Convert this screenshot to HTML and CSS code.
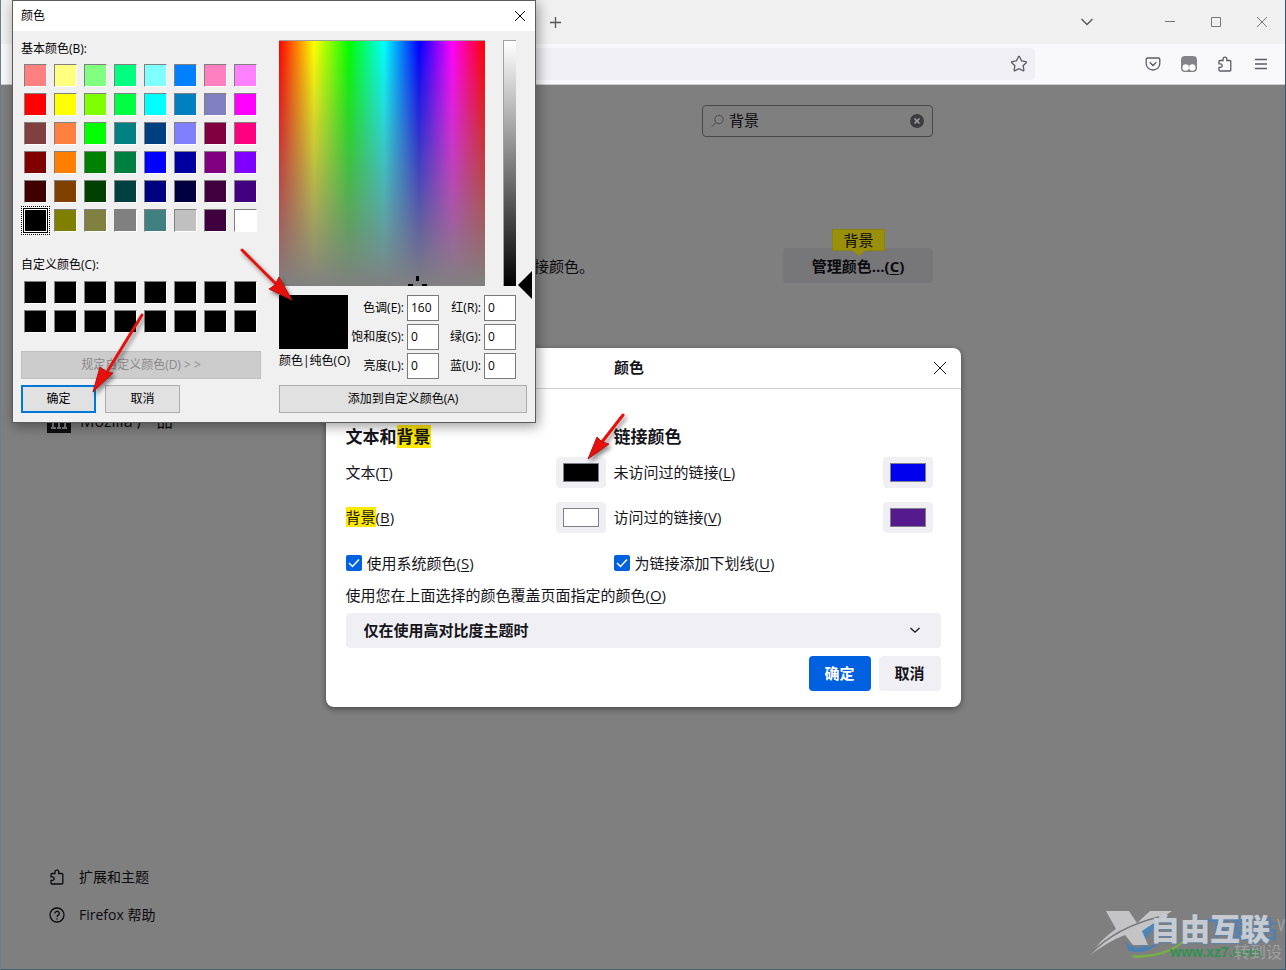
FILE: index.html
```html
<!DOCTYPE html>
<html lang="zh-CN">
<head>
<meta charset="utf-8">
<title>颜色</title>
<link rel="stylesheet" href="styles.css">
</head>
<body>
<div class="browser">
  <header class="tabstrip">
    <button class="tool" aria-label="新建标签页"><svg width="16" height="16" viewBox="0 0 16 16"><path d="M8.500 3v11M3 8.500h11"/></svg></button>
    <span class="grow"></span>
    <button class="tool tablist" aria-label="列出标签页"><svg width="16" height="16" viewBox="0 0 16 16"><path d="M2.500 5l5.500 5.500L13.500 5"/></svg></button>
    <button class="winctl" aria-label="最小化"><svg width="12" height="12" viewBox="0 0 12 12"><path d="M1 5.500h10"/></svg></button>
    <button class="winctl" aria-label="最大化"><svg width="12" height="12" viewBox="0 0 12 12"><path d="M1.500 1.500h9v9h-9z"/></svg></button>
    <button class="winctl" aria-label="关闭窗口"><svg width="12" height="12" viewBox="0 0 12 12"><path d="M1 1l10 10M11 1L1 11"/></svg></button>
  </header>
  <div class="toolbar">
    <div class="urlbar">
      <button class="star" aria-label="收藏"><svg width="18" height="18" viewBox="0 0 18 18"><path d="M9 1.500q.5 0 .8.700L11.600 6l4.200.6q1 .3.400 1.100l-3.100 3 .8 4.300q0 1-1 .7L9 13.700l-3.900 2q-1 .3-1-.7l.8-4.300-3.100-3q-.6-.8.400-1.100L6.400 6l1.800-3.800q.3-.7.800-.7z"/></svg></button>
    </div>
    <button class="tool" aria-label="Pocket"><svg width="16" height="16" viewBox="0 0 16 16"><path d="M2.500 2h11q1.300 0 1.300 1.300V7.500a6.800 6.500 0 0 1-13.600 0V3.300Q1.200 2 2.500 2zM4.700 6.300L8 9.500l3.300-3.200"/></svg></button>
    <button class="tool" aria-label="扩展按钮"><svg width="16" height="16" viewBox="0 0 16 16"><rect x="0" y="0" width="16" height="16" rx="4" fill="#838388" stroke="none"/><circle cx="4.700" cy="11.500" r="3.200" fill="#fff" stroke="none"/><circle cx="11.300" cy="11.500" r="3.200" fill="#fff" stroke="none"/></svg></button>
    <button class="tool" aria-label="扩展"><svg width="16" height="16" viewBox="0 0 16 16"><path d="M2 5.500q0-1 1-1h3V3a1.900 1.900 0 0 1 3.800 0v1.500h3q1 0 1 1V14q0 1-1 1H3q-1 0-1-1v-2.700h1.500a1.700 1.700 0 0 0 0-3.400H2z"/></svg></button>
    <button class="tool" aria-label="菜单"><svg width="16" height="16" viewBox="0 0 16 16"><path d="M2 3.500h12M2 8h12M2 12.500h12"/></svg></button>
  </div>

  <main class="page">
    <nav class="sidebar">
      <a class="brand" href="#"><svg width="24" height="24" viewBox="0 0 24 24"><path d="M0 0h24v24H0z" fill="#101012"/><path d="M4 19h5M6 18v-6M10 19h4M12 18v-6q0-2-3-2M15 19h5M18 18v-6q0-2-3-2" fill="none" stroke="#808080" stroke-width="2"/></svg>Mozilla 产 品</a>
      <a class="navlink bottom" href="#"><svg width="16" height="16" viewBox="0 0 16 16"><path d="M2 5.500q0-1 1-1h3V3a1.900 1.900 0 0 1 3.800 0v1.500h3q1 0 1 1V14q0 1-1 1H3q-1 0-1-1v-2.700h1.500a1.700 1.700 0 0 0 0-3.400H2z"/></svg>扩展和主题</a>
      <a class="navlink" href="#"><svg width="16" height="16" viewBox="0 0 16 16"><circle cx="8" cy="8" r="7"/><path d="M5.800 6.500a2.200 2.200 0 1 1 3.300 1.900Q8 9 8 10M8 11.300v1.200"/></svg>Firefox 帮助</a>
    </nav>
    <section class="content">
      <div class="search">
        <svg width="14" height="14" viewBox="0 0 14 14"><circle cx="8" cy="5.500" r="4.200"/><path d="M5 8.500L1 12.500"/></svg>
        <input type="text" value="背景" aria-label="在设置中查找">
        <button class="clear" aria-label="清除"><svg width="14" height="14" viewBox="0 0 14 14"><circle cx="7" cy="7" r="7" fill="#3d3d41" stroke="none"/><path d="M4.500 4.500l5 5M9.500 4.500l-5 5" stroke="#a0a0a0" stroke-width="1.600"/></svg></button>
      </div>
      <div class="setting">
        <p>接颜色。</p>
        <div class="manage">
          <span class="hit">背景</span>
          <button>管理颜色...(<u>C</u>)</button>
        </div>
      </div>
    </section>

    <div class="watermark">
      <svg width="110" height="54" viewBox="0 0 110 54"><path d="M76 13Q48 17 50 31q1 7 8 7 0-15 18-25z" fill="#4a86b8"/><path d="M38 32q10 12 34 2-12 12-30 8z" fill="#4a7fb4"/><path d="M43 46q42 2 61-23Q92 48 48 49z" fill="#79ad48"/><path d="M19 2h23l8 12L63 2h22L55 22l6 14H46L38 26Q22 32 3 46 14 30 29 20z" fill="#c4c4c6"/><path d="M3 45Q30 18 72 8" fill="none" stroke="#77777a" stroke-width="1.500"/></svg>
      <span class="site">下载站</span>
      <span class="name">自由互联</span>
      <span class="url">www.xz7.com</span>
      <span class="activate">转到设</span>
      <span class="activate line">W</span>
    </div>

    <div class="backdrop">
      <form class="modal">
        <header><h1>颜色</h1><button type="button" class="close" aria-label="关闭"><svg width="14" height="14" viewBox="0 0 14 14"><path d="M1 1l12 12M13 1L1 13"/></svg></button></header>
        <div class="modal-body">
          <div class="columns">
            <h2>文本和<mark>背景</mark></h2>
            <h2>链接颜色</h2>
            <div class="pick"><label for="c1">文本(<u>T</u>)</label><input id="c1" type="color" value="#000000"></div>
            <div class="pick"><label for="c2">未访问过的链接(<u>L</u>)</label><input id="c2" type="color" value="#0000ee"></div>
            <div class="pick second"><label for="c3"><mark>背景</mark>(<u>B</u>)</label><input id="c3" type="color" value="#ffffff"></div>
            <div class="pick second"><label for="c4">访问过的链接(<u>V</u>)</label><input id="c4" type="color" value="#551a8b"></div>
            <label class="check"><input type="checkbox" checked><svg width="16" height="16" viewBox="0 0 16 16"><path d="M3 8l3.500 3.500L13 4.500"/></svg><span>使用系统颜色(<u>S</u>)</span></label>
            <label class="check"><input type="checkbox" checked><svg width="16" height="16" viewBox="0 0 16 16"><path d="M3 8l3.500 3.500L13 4.500"/></svg><span>为链接添加下划线(<u>U</u>)</span></label>
          </div>
          <label class="override" for="ov">使用您在上面选择的颜色覆盖页面指定的颜色(<u>O</u>)</label>
          <div class="select">
            <select id="ov"><option>仅在使用高对比度主题时</option></select>
            <svg width="12" height="12" viewBox="0 0 12 12"><path d="M1.500 4L6 8.200 10.500 4"/></svg>
          </div>
          <div class="actions"><button type="button" class="primary">确定</button><button type="button">取消</button></div>
        </div>
      </form>
    </div>
  </main>
</div>

<form class="picker">
  <header><h1>颜色</h1><button type="button" class="close" aria-label="关闭"><svg width="12" height="12" viewBox="0 0 12 12"><path d="M1 1l10 10M11 1L1 11"/></svg></button></header>
  <div class="picker-body">
    <div class="left">
      <p>基本颜色(B):</p>
      <div class="swatches" id="basic"></div>
      <p class="custom-title">自定义颜色(C):</p>
      <div class="swatches custom" id="custom"></div>
      <button type="button" class="define" disabled>规定自定义颜色(D) &gt; &gt;</button>
      <div class="buttons"><button type="button" class="default">确定</button><button type="button">取消</button></div>
    </div>
    <div class="right">
      <div class="fields-top">
        <div class="spectrum"><svg class="cross" width="20" height="10" viewBox="0 0 20 10"><path d="M8 0h3v5H8zM0 8h5v2H0zM14 8h5v2h-5z"/></svg></div>
        <div class="lum"><svg class="marker" width="14" height="28" viewBox="0 0 14 28"><path d="M0 14L14 0v28z"/></svg></div>
      </div>
      <div class="values">
        <div class="preview"><div class="solid"></div><p>颜色|纯色(O)</p></div>
        <div class="fields">
          <label for="h">色调(E):</label><input id="h" type="text" value="160"><label for="r">红(R):</label><input id="r" type="text" value="0">
          <label for="s">饱和度(S):</label><input id="s" type="text" value="0"><label for="g">绿(G):</label><input id="g" type="text" value="0">
          <label for="l">亮度(L):</label><input id="l" type="text" value="0"><label for="b">蓝(U):</label><input id="b" type="text" value="0">
        </div>
      </div>
      <button type="button" class="add">添加到自定义颜色(A)</button>
    </div>
  </div>
</form>

<svg class="arrow a1" width="60" height="60" viewBox="0 0 60 60"><path class="shaft" d="M5 5L40 40"/><path d="M55 55L32 44l6-4 4-8z"/></svg>
<svg class="arrow a2" width="60" height="86" viewBox="0 0 60 86"><path class="shaft" d="M52 5L17 62"/><path d="M3 82L10 57l7 5 6 1z"/></svg>
<svg class="arrow a3" width="50" height="56" viewBox="0 0 50 56"><path class="shaft" d="M43 5L22 32"/><path d="M8 49L17 27l5 5 7 2z"/></svg>
<script src="script.js"></script>
</body>
</html>
```

FILE: styles.css
```css
* { box-sizing: border-box; }
body {
  margin: 0;
  font: 15px/20px "Open Sans", "Noto Sans CJK SC", sans-serif;
  color: #15141a;
  overflow: hidden;
}
h1, h2, p { margin: 0; }
button, input, select { font: inherit; color: inherit; }
button { border: 0; padding: 0; background: none; }
svg { display: block; flex: none; fill: none; stroke: currentColor; }
a { color: inherit; text-decoration: none; }
u { text-underline-offset: 2px; }
mark { background: #ffe900; color: inherit; }

.browser {
  display: flex;
  flex-direction: column;
  min-height: 100vh;
  border-right: 1px solid #34557f;
  border-bottom: 1px solid #3e6377;
  border-left: 1px solid #6c7f8e;
}
.tabstrip {
  display: flex;
  align-items: center;
  height: 44px;
  padding-left: 536px;
  background: #f0f0f0;
  color: #55555a;
}
.grow { flex: 1; }
.tool { display: grid; place-items: center; width: 36px; height: 32px; }
.tool svg, .star svg { stroke-width: 1.3; }
.tablist { margin-right: 42px; }
.winctl { display: grid; place-items: center; width: 46px; height: 44px; color: #777; }
.toolbar {
  display: flex;
  align-items: center;
  height: 41px;
  padding: 0 6px 1px 0;
  background: #f9f9fb;
  border-bottom: 1px solid #ccc;
  color: #5b5b66;
}
.urlbar {
  display: flex;
  justify-content: flex-end;
  align-items: center;
  flex: 1;
  height: 32px;
  margin: 0 100px 0 300px;
  padding-right: 7px;
  background: #f0f0f4;
  border-radius: 4px;
}
.page { position: relative; display: flex; flex: 1; background: #7f7f7f; color: #0b0a0d; }
.sidebar { display: flex; flex-direction: column; width: 268px; padding: 324px 0 35px 46px; font-size: 14px; }
.brand { display: flex; align-items: center; gap: 9px; font-size: 16px; line-height: 24px; }
.navlink { display: flex; align-items: center; gap: 14px; height: 38px; padding-left: 2px; }
.navlink svg { stroke-width: 1.3; }
.bottom { margin-top: auto; }
.content { flex: 1; max-width: 664px; padding-top: 20px; }
.search {
  display: flex;
  align-items: center;
  gap: 4px;
  width: 231px;
  height: 32px;
  margin-left: auto;
  padding: 0 8px;
  border: 1px solid #48484c;
  border-radius: 4px;
}
.search > svg { color: #48484c; }
.search input { flex: 1; min-width: 0; padding: 0 0 2px; border: 0; background: none; outline: 0; }
.setting { display: flex; align-items: center; justify-content: space-between; margin-top: 111px; padding-left: 265px; }
.manage { position: relative; }
.manage button { width: 150px; height: 35px; border-radius: 4px; background: #77777a; font-weight: 700; }
.hit {
  position: absolute;
  z-index: 1;
  left: 49px;
  top: -19px;
  width: 53px;
  height: 22px;
  border: 1px solid #8c8410;
  background: #9a8f0a;
  text-align: center;
}
.hit::after {
  content: "";
  position: absolute;
  left: 19px;
  top: 20px;
  border: 7px solid transparent;
  border-top: 6px solid #9a8f0a;
  border-bottom: 0;
}

.backdrop { position: absolute; inset: 0; display: grid; place-items: center; }
.modal {
  width: 100%;
  max-width: 635px;
  border-radius: 8px;
  background: #fff;
  color: #15141a;
  box-shadow: 0 2px 6px rgba(0, 0, 0, .45);
}
.modal header { position: relative; height: 41px; border-bottom: 1px solid #cfcfd3; }
.modal h1 { padding-right: 28px; font-size: 15px; line-height: 38px; text-align: center; font-weight: 600; }
.modal .close { position: absolute; right: 14px; top: 13px; }
.modal-body { padding: 36px 20px 16px; }
.columns { display: grid; grid-template-columns: 260fr 319fr; column-gap: 8px; padding-right: 8px; }
.modal h2 { font-size: 17px; line-height: 24px; font-weight: 700; margin-bottom: 8px; }
.pick { display: flex; align-items: center; justify-content: space-between; height: 31px; }
.pick.second { margin-top: 14px; }
.pick input {
  appearance: none;
  width: 50px;
  height: 31px;
  padding: 6px 7px;
  border: 0;
  border-radius: 4px;
  background: #f0f0f4;
}
.pick input::-webkit-color-swatch-wrapper { padding: 0; }
.pick input::-webkit-color-swatch { border: 1px solid #7f7f88; border-radius: 0; }
.check { position: relative; display: flex; align-items: center; gap: 5px; margin-top: 20px; }
.check input { appearance: none; width: 16px; height: 16px; margin: 0; border-radius: 2px; background: #0061e0; }
.check svg { position: absolute; left: 0; top: 2px; stroke: #fff; stroke-width: 1.5; }
.override { display: block; margin: 12px 0 8px; }
.select { position: relative; }
.select select {
  appearance: none;
  display: block;
  width: 100%;
  height: 35px;
  padding: 0 18px;
  border: 0;
  border-radius: 4px;
  background: #f0f0f4;
  font-weight: 600;
}
.select svg { position: absolute; right: 20px; top: 11px; stroke-width: 1.3; }
.actions { display: flex; justify-content: flex-end; gap: 8px; margin-top: 8px; }
.actions button { width: 62px; height: 35px; border-radius: 4px; background: #f0f0f4; font-weight: 600; }
.actions .primary { background: #0061e0; color: #fff; }

.picker {
  position: absolute;
  left: 12px;
  top: 0;
  width: 524px;
  border: 1px solid #5c5c5c;
  background: #f0f0f0;
  color: #000;
  font-size: 12px;
  line-height: 16px;
  box-shadow: 2px 3px 12px rgba(0, 0, 0, .4);
}
.picker header { display: flex; align-items: center; justify-content: space-between; height: 30px; padding: 0 9px 0 8px; background: #fff; }
.picker h1 { font-size: 12px; font-weight: 400; }
.picker-body { display: flex; gap: 18px; padding: 9px 8px; }
.left { width: 240px; padding-top: 1px; }
.swatches { display: grid; grid-template-columns: repeat(8, 23px); gap: 6px 7px; margin: 7px 0 0 3px; }
.swatches button {
  height: 23px;
  border: 1px solid;
  border-color: #808080 #fff #fff #808080;
}
.swatches .chosen { border-color: #fff; outline: 1px solid #000; box-shadow: 0 0 0 2px #fff; position: relative; }
.swatches .chosen::after { content: ""; position: absolute; inset: -4px; border: 1px dotted #000; }
.custom-title { margin-top: 25px; }
.swatches.custom { margin-top: 8px; }
.left > button, .buttons button, .add { height: 28px; border: 1px solid #adadad; background: #e1e1e1; }
.left .define { display: block; width: 100%; margin-top: 18px; border-color: #bfbfbf; background: #ccc; color: #8a8a8a; }
.buttons { display: flex; gap: 9px; margin-top: 6px; }
.buttons button { width: 75px; }
.buttons .default { border: 2px solid #0078d7; }
.right { display: flex; flex-direction: column; flex: 1; }
.fields-top { display: flex; gap: 18px; }
.spectrum {
  position: relative;
  width: 206px;
  height: 246px;
  border-top: 1px solid #a0a0a0;
  background:
    linear-gradient(rgba(128, 128, 128, 0), #808080),
    linear-gradient(to right, #f00, #ff0 17%, #0f0 34%, #0ff 51%, #00f 68%, #f0f 84%, #f00);
}
.cross { position: absolute; left: 129px; bottom: 0; fill: #000; stroke: none; }
.lum { position: relative; width: 13px; height: 246px; border: solid #a0a0a0; border-width: 1px 0 0 1px; background: linear-gradient(#fff, #000); }
.marker { position: absolute; left: 14px; bottom: -13px; fill: #000; stroke: none; }
.values { display: flex; margin-top: 9px; }
.preview { width: 69px; white-space: nowrap; }
.solid { height: 54px; margin-bottom: 4px; background: #000; }
.fields { display: grid; grid-template-columns: 56px 32px 39px 32px; gap: 3px; }
.fields label { display: flex; align-items: center; justify-content: flex-end; white-space: nowrap; }
.fields input { width: 100%; height: 26px; padding: 0 3px 2px; border: 1px solid #7a7a7a; background: #fff; }
.add { margin-top: auto; }

.arrow { position: absolute; fill: #e8100c; stroke: #b01512; stroke-width: 1; filter: drop-shadow(2px 3px 2px rgba(0, 0, 0, .45)); pointer-events: none; }
.arrow .shaft { stroke: #e8100c; stroke-width: 3; stroke-linecap: round; }
.a1 { left: 237px; top: 245px; }
.a2 { left: 90px; top: 310px; }
.a3 { left: 580px; top: 410px; }

.watermark { position: absolute; right: 0; bottom: 0; width: 200px; height: 62px; overflow: hidden; white-space: nowrap; }
.watermark svg { position: absolute; left: 2px; top: 2px; stroke: none; }
.watermark span { position: absolute; }
.watermark .name { left: 65px; top: 4px; font-size: 30px; line-height: 36px; font-weight: 900; color: #c6cbd1; text-shadow: 1px 1px 0 #6284aa; }
.watermark .site { left: 120px; top: 6px; font-size: 24px; line-height: 32px; font-weight: 700; color: #5580b0; }
.watermark .url { left: 85px; top: 35px; font: 700 14px/20px "Liberation Sans", sans-serif; color: #2f9350; }
.watermark .activate { left: 149px; top: 33px; font-size: 16px; line-height: 24px; color: #a0a0a0; }
.watermark .activate.line { left: 192px; top: 6px; }
```

FILE: script.js
```js
const basic = [
  'ff8080', 'ffff80', '80ff80', '00ff80', '80ffff', '0080ff', 'ff80c0', 'ff80ff',
  'ff0000', 'ffff00', '80ff00', '00ff40', '00ffff', '0080c0', '8080c0', 'ff00ff',
  '804040', 'ff8040', '00ff00', '008080', '004080', '8080ff', '800040', 'ff0080',
  '800000', 'ff8000', '008000', '008040', '0000ff', '0000a0', '800080', '8000ff',
  '400000', '804000', '004000', '004040', '000080', '000040', '400040', '400080',
  '000000', '808000', '808040', '808080', '408080', 'c0c0c0', '400040', 'ffffff'
];

function fill(id, colors) {
  const box = document.getElementById(id);
  colors.forEach((c, i) => {
    const b = document.createElement('button');
    b.type = 'button';
    b.style.backgroundColor = '#' + c;
    b.setAttribute('aria-label', '#' + c);
    if (id === 'basic' && i === 40) b.className = 'chosen';
    box.append(b);
  });
}

fill('basic', basic);
fill('custom', Array(16).fill('000000'));
```
